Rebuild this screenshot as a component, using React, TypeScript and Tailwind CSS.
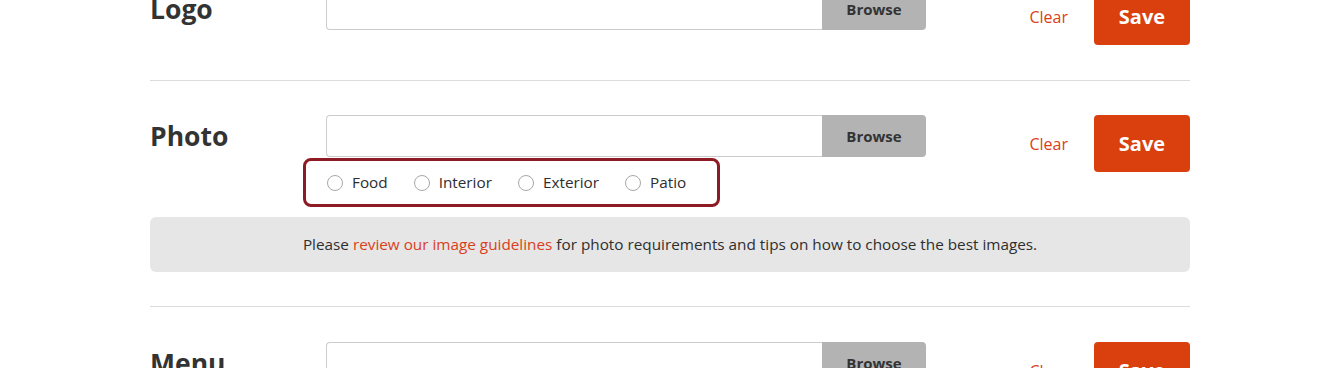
const font = { fontFamily: '"Open Sans", "Liberation Sans", sans-serif' };

function UploadRow({ label, children }: { label: string; children?: React.ReactNode }) {
  return (
    <div className="flex items-start">
      <h2 className="w-[176px] shrink-0 text-[26.5px] font-bold leading-[42px] text-[#333]">{label}</h2>
      <div className="w-[600px] shrink-0">
        <div className="flex h-[42px]">
          <div className="flex-1 rounded-l-[4px] border border-r-0 border-[#cccccc] bg-white" />
          <button className="w-[104px] rounded-r-[4px] bg-[#b3b3b3] text-[15px] font-bold text-[#333]">
            Browse
          </button>
        </div>
        {children}
      </div>
      <div className="flex flex-1 items-center justify-end gap-[26px]">
        <span className="text-[16px] text-[#d9401a]">Clear</span>
        <button className="h-[57px] w-[96px] rounded-[4px] bg-[#da3f0e] text-[20px] font-bold text-white">
          Save
        </button>
      </div>
    </div>
  );
}

const options = ["Food", "Interior", "Exterior", "Patio"];

export default function App() {
  return (
    <div className="h-[368px] w-[1340px] overflow-hidden bg-white" style={font}>
      <div className="mx-auto -mt-[47px] w-[1040px]">
        <section className="border-b border-[#dcdcdc] pt-[35px] pb-[35px]">
          <UploadRow label="Logo" />
        </section>

        <section className="border-b border-[#dcdcdc] pt-[34px] pb-[34px]">
          <UploadRow label="Photo">
            <div className="mt-px -ml-[23px] flex h-[49px] w-[417px] items-center gap-[26px] rounded-[8px] border-[3px] border-[#8e1b23] pl-[21px]">
              {options.map((opt) => (
                <label key={opt} className="flex items-center gap-[9px] text-[15.3px] text-[#2e2e2e]">
                  <span className="h-4 w-4 rounded-full border border-[#a8a8a8] bg-white" />
                  {opt}
                </label>
              ))}
            </div>
          </UploadRow>
          <div className="mt-[10px] flex h-[55px] items-center justify-center rounded-[6px] bg-[#e6e6e6] text-[15.3px] text-[#2e2e2e]">
            <p>
              Please <span className="text-[#d9401a]">review our image guidelines</span> for photo requirements and
              tips on how to choose the best images.
            </p>
          </div>
        </section>

        <section className="pt-[35px]">
          <UploadRow label="Menu" />
        </section>
      </div>
    </div>
  );
}
